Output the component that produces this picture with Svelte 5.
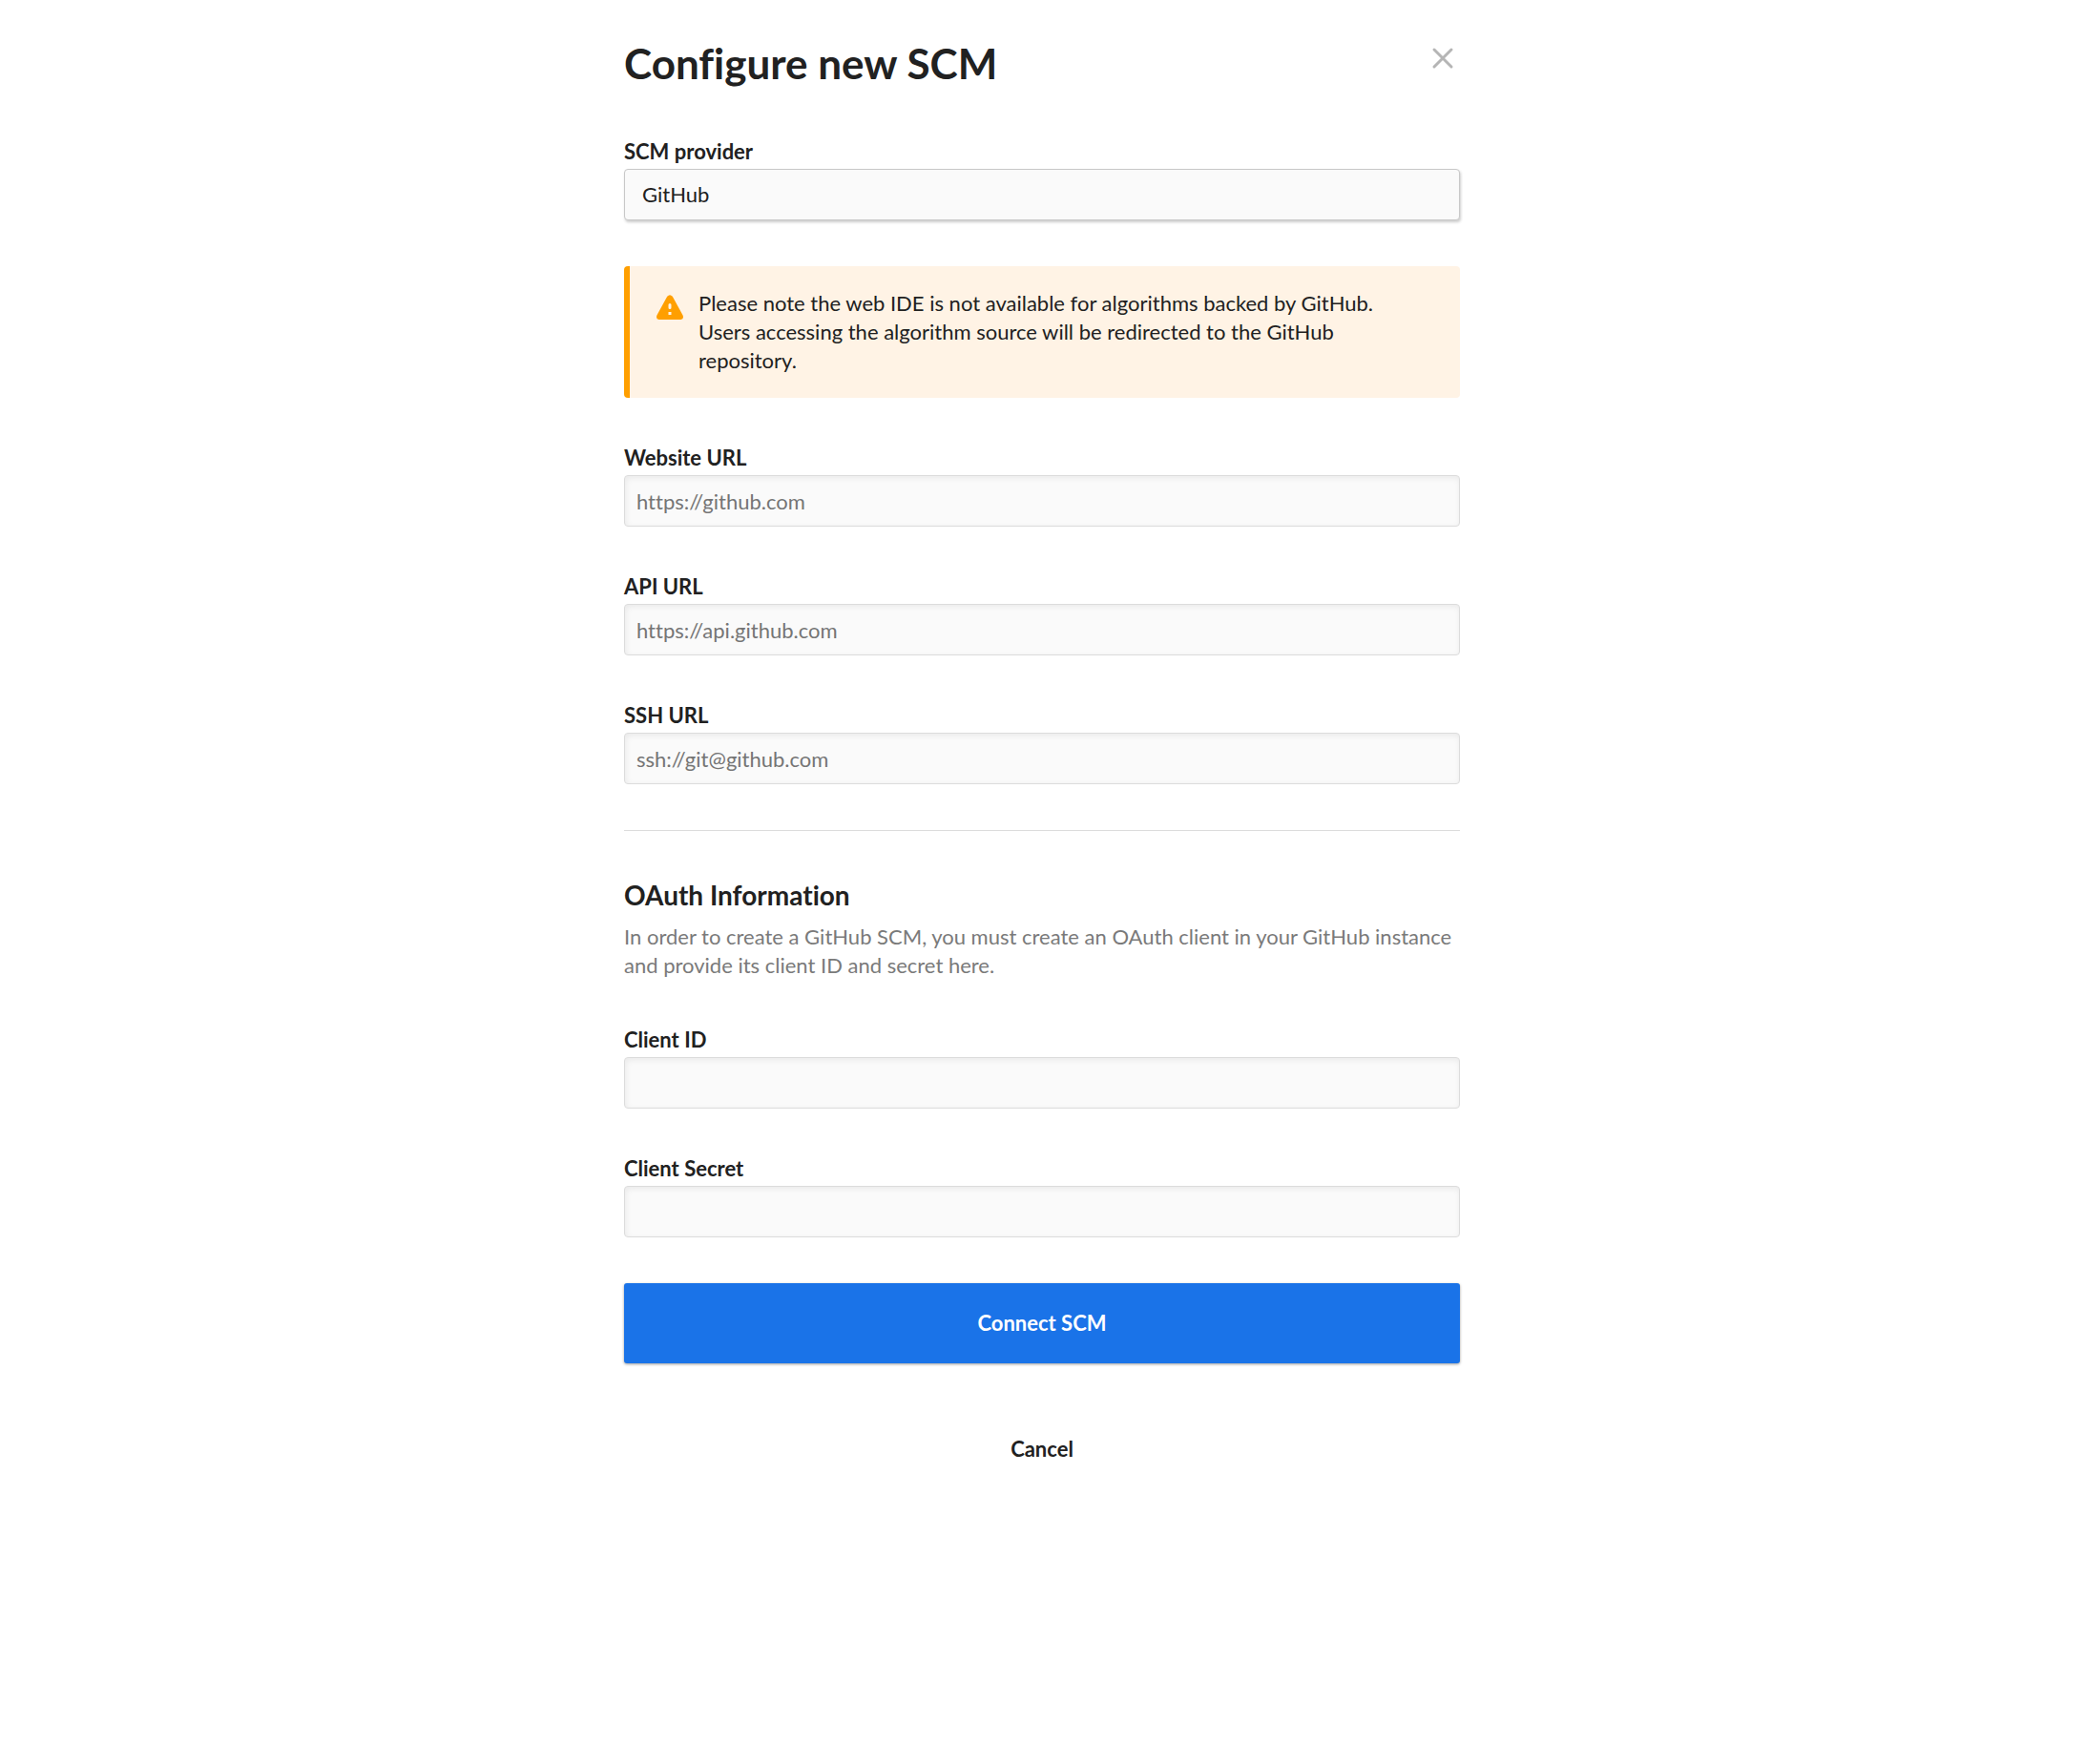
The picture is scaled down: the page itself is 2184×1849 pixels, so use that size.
<script>
  const urls = [
    { id: 'website-url', label: 'Website URL', placeholder: 'https://github.com' },
    { id: 'api-url', label: 'API URL', placeholder: 'https://api.github.com' },
    { id: 'ssh-url', label: 'SSH URL', placeholder: 'ssh://git@github.com' }
  ];
  const credentials = [
    { id: 'client-id', label: 'Client ID' },
    { id: 'client-secret', label: 'Client Secret' }
  ];
</script>

{#snippet field(item)}
  <div class="field">
    <label for={item.id}>{item.label}</label>
    <input id={item.id} type="text" placeholder={item.placeholder} />
  </div>
{/snippet}

<main>
  <header>
    <h1>Configure new SCM</h1>
    <button class="close" type="button" aria-label="Close">
      <svg viewBox="0 0 36 36" aria-hidden="true">
        <path d="M9 9 27 27M27 9 9 27" fill="none" stroke="#b5b5b5" stroke-width="3" stroke-linecap="round" />
      </svg>
    </button>
  </header>

  <form>
    <div class="field">
      <label for="provider">SCM provider</label>
      <select id="provider">
        <option>GitHub</option>
      </select>
    </div>

    <div class="notice" role="note">
      <svg viewBox="0 0 28 26" aria-hidden="true">
        <path
          fill="#ff9f00"
          fill-rule="evenodd"
          d="M11.2 1.7Q14-1.4 16.8 1.7L27.6 21.5Q29 25.6 25.4 26H2.6Q-1 25.6 .4 21.5ZM14 9Q12.5 9 12.5 10.5V13.5Q12.5 15 14 15T15.5 13.5V10.5Q15.5 9 14 9ZM12.5 18V21H15.5V18Z"
        />
      </svg>
      <p>
        Please note the web IDE is not available for algorithms backed by GitHub.
        Users accessing the algorithm source will be redirected to the GitHub
        repository.
      </p>
    </div>

    {#each urls as item}
      {@render field(item)}
    {/each}

    <hr />

    <section>
      <h2>OAuth Information</h2>
      <p>
        In order to create a GitHub SCM, you must create an OAuth client in your GitHub instance
        and provide its client ID and secret here.
      </p>
    </section>

    {#each credentials as item}
      {@render field(item)}
    {/each}

    <button class="action primary" type="button">Connect SCM</button>
    <button class="action" type="button">Cancel</button>
  </form>
</main>

<style>
  :global(body) {
    background: #fff;
  }

  main {
    box-sizing: border-box;
    max-width: 876px;
    margin: 0 auto;
    padding: 36px 0;
    color: #212121;
    font: 22px/30px Lato, sans-serif;
    font-variant-ligatures: none;
  }

  header {
    display: flex;
    justify-content: space-between;
    align-items: flex-start;
    margin-bottom: 48px;
  }

  h1,
  h2,
  p {
    margin: 0;
  }

  h1 {
    font-size: 44px;
    line-height: 60px;
    font-weight: 700;
  }

  h2 {
    margin-bottom: 10px;
    font-size: 28px;
    line-height: 38px;
    font-weight: 700;
  }

  button {
    padding: 0;
    border: 0;
    background: none;
    color: inherit;
    font: inherit;
    cursor: pointer;
  }

  .close {
    padding-top: 7px;
  }

  .close svg {
    display: block;
    width: 36px;
    height: 36px;
  }

  form {
    display: flex;
    flex-direction: column;
    gap: 48px;
  }

  .field {
    display: flex;
    flex-direction: column;
    gap: 3px;
  }

  label {
    font-weight: 700;
  }

  input,
  select {
    box-sizing: border-box;
    width: 100%;
    height: 54px;
    margin: 0;
    border: 1px solid #dcdcdc;
    border-radius: 4px;
    background: #fafafa;
    color: inherit;
    font: inherit;
    font-variant-ligatures: none;
  }

  input {
    padding: 0 12px;
    box-shadow: inset 1px 2px 6px rgba(0, 0, 0, 0.07);
  }

  input::placeholder {
    color: #757575;
    opacity: 1;
  }

  select {
    appearance: none;
    padding: 0 18px;
    border-color: #c8c8c8;
    box-shadow: 1px 2px 3px rgba(0, 0, 0, 0.2);
  }

  .notice {
    display: flex;
    gap: 16px;
    padding: 24px 48px 24px 28px;
    border-left: 6px solid #ff9f00;
    border-radius: 4px;
    background: #fff3e5;
  }

  .notice svg {
    flex: none;
    width: 28px;
    height: 26px;
    margin-top: 6px;
  }

  hr {
    width: 100%;
    height: 1px;
    margin: 0;
    border: 0;
    background: #dcdcdc;
  }

  section p {
    color: #7a7a7a;
  }

  .action {
    height: 84px;
    border-radius: 3px;
    font-weight: 700;
  }

  .primary {
    background: #1a73e8;
    color: #fff;
    box-shadow: 0 1px 3px rgba(0, 0, 0, 0.4);
  }
</style>
